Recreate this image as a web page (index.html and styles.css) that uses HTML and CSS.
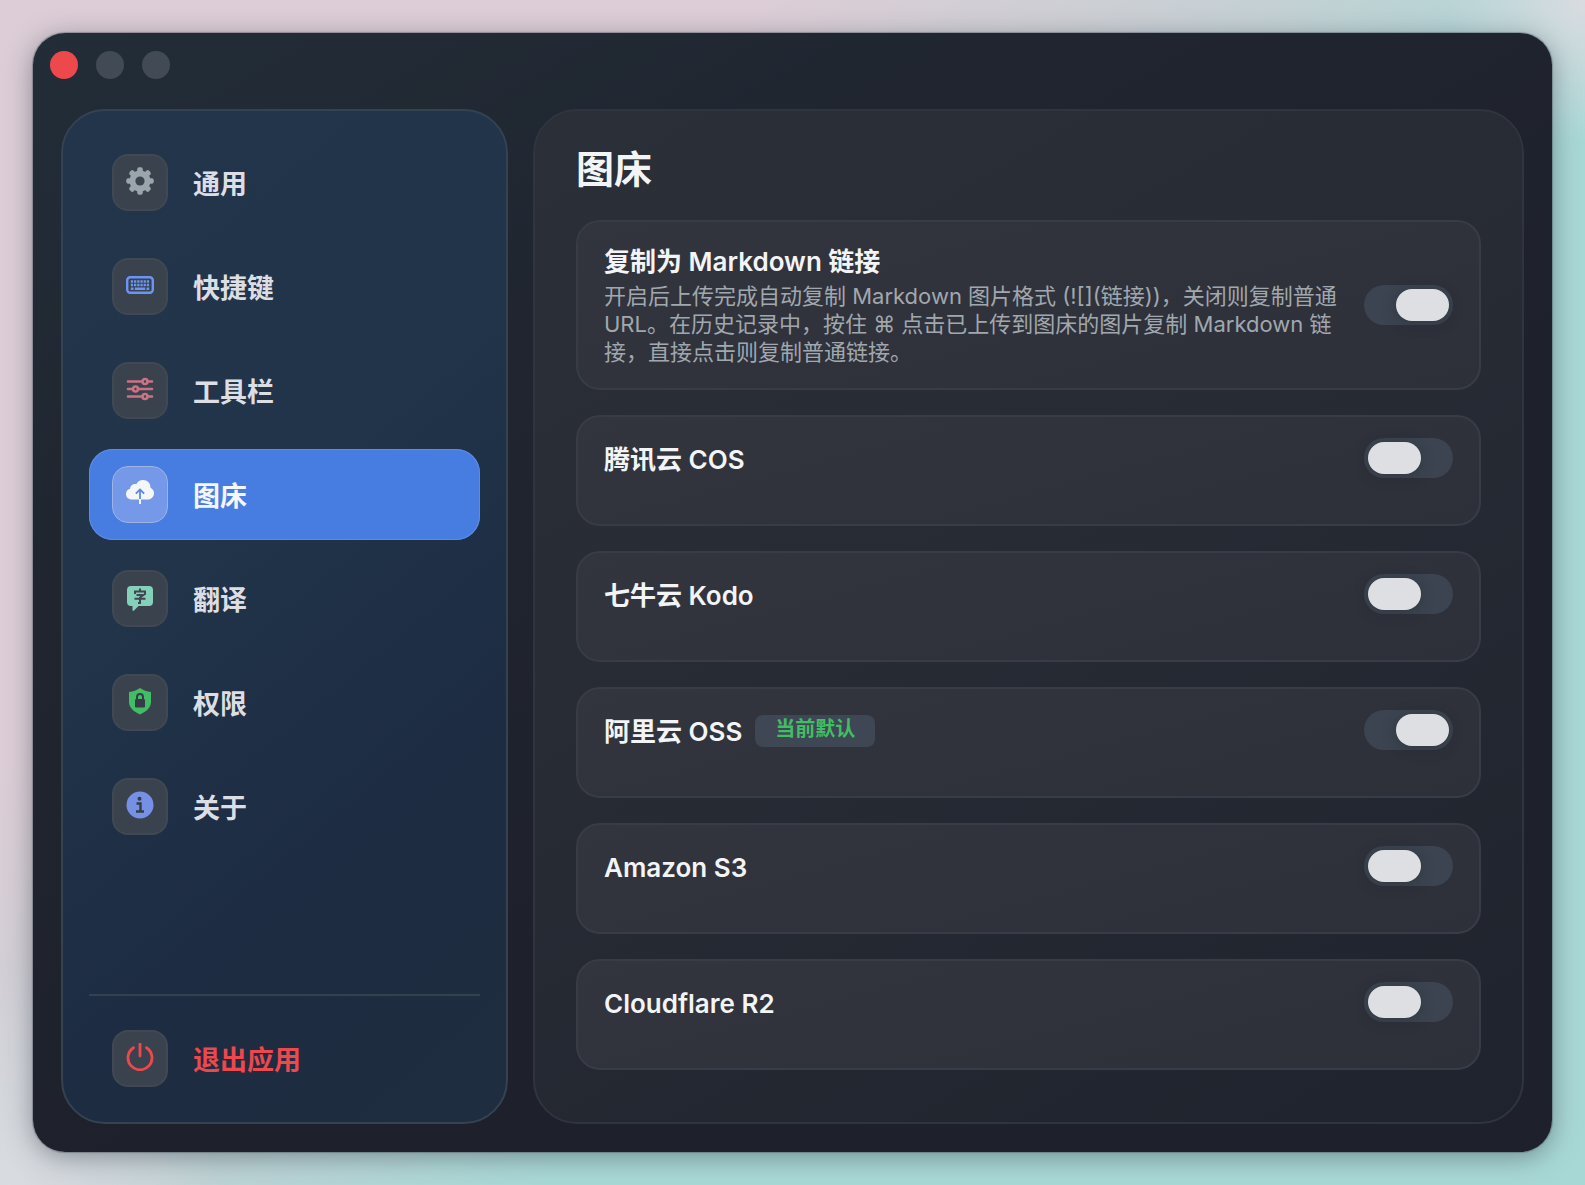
FILE: index.html
```html
<!DOCTYPE html>
<html lang="zh-CN">
<head>
<meta charset="utf-8">
<meta name="viewport" content="width=device-width, initial-scale=1">
<title>图床</title>
<link rel="stylesheet" href="styles.css">
</head>
<body>
<div class="window">
  <header class="titlebar">
    <button class="light light-close" type="button" aria-label="关闭"></button>
    <button class="light" type="button" aria-label="最小化"></button>
    <button class="light" type="button" aria-label="缩放"></button>
  </header>
  <div class="panes">
    <nav class="sidebar">
      <ul class="nav-list">
        <li><a class="nav-item" href="#general"><span class="tile"><svg class="icon c-gray" viewBox="0 0 28 28"><g fill="currentColor"><g id="teeth"><rect x="11.200" y="0.300" width="5.600" height="27.400" rx="2"/><rect x="0.300" y="11.200" width="27.400" height="5.600" rx="2"/></g><use href="#teeth" transform="rotate(45 14 14)"/></g><circle cx="14" cy="14" r="7.500" fill="none" stroke="currentColor" stroke-width="6"/><circle cx="14" cy="14" r="4.600" fill="#3c444f"/></svg></span><span class="nav-label">通用</span></a></li>
        <li><a class="nav-item" href="#shortcuts"><span class="tile"><svg class="icon c-blue" viewBox="0 0 28 28"><rect x="1.200" y="6.200" width="25.600" height="15.600" rx="3" fill="none" stroke="currentColor" stroke-width="2.400"/><path d="M4.800 10.500h18.400M4.800 14h18.400" stroke="currentColor" stroke-width="2.400" stroke-dasharray="2.300 0.900"/><path d="M4.800 17.800h2.700M8.800 17.800h10.400M20.500 17.800h2.700" stroke="currentColor" stroke-width="2.400"/></svg></span><span class="nav-label">快捷键</span></a></li>
        <li><a class="nav-item" href="#toolbar"><span class="tile"><svg class="icon c-pink" viewBox="0 0 28 28" fill="none" stroke="currentColor" stroke-width="2.600" stroke-linecap="round"><path d="M2 6.500h14.500M21.500 6.500H26M2 14h5M12 14h14M2 21.500h14.500M21.500 21.500H26"/><circle cx="19" cy="6.500" r="2.500"/><circle cx="9.500" cy="14" r="2.500"/><circle cx="19" cy="21.500" r="2.500"/></svg></span><span class="nav-label">工具栏</span></a></li>
        <li><a class="nav-item is-active" href="#hosting" aria-current="page"><span class="tile"><svg class="icon c-white" viewBox="0 0 28 28"><path fill="currentColor" d="M6 21.500C2.300 21.500 0 19 0 16c0-2.600 1.600-4.600 4-5.200C4.300 7.700 6.500 6 9 6c.5 0 .9 0 1.300.2C11.500 3.500 14 2 17 2c4.500 0 7.600 3.400 7.500 7.700 2.200 1 3.500 3 3.500 5.500 0 3.600-2.800 6.300-6.300 6.300Z"/><path d="M14 12.500v9M9.800 15.700 14 11.500l4.200 4.200" fill="none" stroke="#5a8be6" stroke-width="1.800"/><path d="M14 21v5" stroke="currentColor" stroke-width="2"/></svg></span><span class="nav-label">图床</span></a></li>
        <li><a class="nav-item" href="#translate"><span class="tile"><svg class="icon c-mint" viewBox="0 0 28 28"><path fill="currentColor" d="M5 3h18a4 4 0 0 1 4 4v12a4 4 0 0 1-4 4H12.500L8 27.500c-.8.700-1.500.4-1.500-.6V23H5a4 4 0 0 1-4-4V7a4 4 0 0 1 4-4Z"/><path d="M14 5.500v3M9 11V8.500h10V11M10.500 12h7L14 14.500V20h-2M8.500 15.800h11" fill="none" stroke="#404753" stroke-width="2"/></svg></span><span class="nav-label">翻译</span></a></li>
        <li><a class="nav-item" href="#permissions"><span class="tile"><svg class="icon c-green" viewBox="0 0 28 28"><path fill="currentColor" d="M14 1c3.500 2.500 6.500 3.300 11 4v10c0 5.500-4.500 9.500-11 12.500C7.500 24.500 3 20.500 3 15V5c4.500-.7 7.500-1.500 11-4Z"/><rect x="9" y="12" width="10" height="8.500" rx="1.200" fill="#353c48"/><path d="M11 12.500v-2.500a3 3 0 0 1 6 0v2.500" fill="none" stroke="#353c48" stroke-width="2"/></svg></span><span class="nav-label">权限</span></a></li>
        <li><a class="nav-item" href="#about"><span class="tile"><svg class="icon c-indigo" viewBox="0 0 28 28"><circle cx="14" cy="14" r="13.500" fill="currentColor"/><circle cx="13.500" cy="7.800" r="2" fill="#353c48"/><path d="M10.500 12.500h4v8M10 20.500h8" fill="none" stroke="#353c48" stroke-width="2.400"/></svg></span><span class="nav-label">关于</span></a></li>
      </ul>
      <div class="nav-footer">
        <button class="nav-item is-quit" type="button"><span class="tile"><svg class="icon" viewBox="0 0 28 28" fill="none" stroke="currentColor" stroke-width="2.800" stroke-linecap="round"><path d="M14 1v12M7.500 4.700a12 12 0 1 0 13 0"/></svg></span><span class="nav-label">退出应用</span></button>
      </div>
    </nav>
    <main class="content">
      <h1 class="page-title">图床</h1>
      <div class="cards">
        <section class="card card-tall">
          <div class="card-text">
            <label class="card-title" for="sw-md">复制为 Markdown 链接</label>
            <p class="card-desc" id="md-desc">开启后上传完成自动复制 Markdown 图片格式 (![](链接))，关闭则复制普通 URL。在历史记录中，按住 ⌘ 点击已上传到图床的图片复制 Markdown 链接，直接点击则复制普通链接。</p>
          </div>
          <input class="switch" id="sw-md" type="checkbox" role="switch" aria-describedby="md-desc" checked>
        </section>
        <section class="card">
          <label class="card-title" for="sw-cos">腾讯云 COS</label>
          <input class="switch" id="sw-cos" type="checkbox" role="switch">
        </section>
        <section class="card">
          <label class="card-title" for="sw-kodo">七牛云 Kodo</label>
          <input class="switch" id="sw-kodo" type="checkbox" role="switch">
        </section>
        <section class="card">
          <div class="card-heading">
            <label class="card-title" for="sw-oss">阿里云 OSS</label>
            <span class="badge">当前默认</span>
          </div>
          <input class="switch" id="sw-oss" type="checkbox" role="switch" checked>
        </section>
        <section class="card">
          <label class="card-title" for="sw-s3">Amazon S3</label>
          <input class="switch" id="sw-s3" type="checkbox" role="switch">
        </section>
        <section class="card">
          <label class="card-title" for="sw-r2">Cloudflare R2</label>
          <input class="switch" id="sw-r2" type="checkbox" role="switch">
        </section>
      </div>
    </main>
  </div>
</div>
</body>
</html>
```
FILE: styles.css
```css
* {
  box-sizing: border-box;
}

body {
  display: flex;
  min-height: 100vh;
  margin: 0;
  padding: 33px;
  font-family: Inter, "Noto Sans CJK SC", "DejaVu Sans", sans-serif;
  color: #f3f4f6;
  background:
    radial-gradient(circle at 100% 0, #d9dce1 0, rgba(217, 220, 225, 0) 140px),
    radial-gradient(circle at 0 100%, #d9dce1 0, rgba(217, 220, 225, 0) 220px),
    linear-gradient(135deg, #dccdd6 0%, #dccdd6 28%, #c6d0d4 45%, #a8d8d6 62%);
}

.window {
  display: flex;
  flex: 1;
  flex-direction: column;
  padding: 0 28px 28px;
  border-radius: 32px;
  background: linear-gradient(150deg, #222d38 0%, #20252f 30%, #1e212c 60%);
  box-shadow: 0 0 1px 1px rgba(70, 80, 92, 0.4), 0 5px 26px rgba(60, 70, 80, 0.5);
}

.titlebar {
  display: flex;
  align-items: center;
  gap: 18px;
  height: 76px;
  padding: 0 0 13px;
  margin-left: -11px;
}

.light {
  width: 28px;
  height: 28px;
  padding: 0;
  border: 0;
  border-radius: 50%;
  background: #414a55;
}

.light-close {
  background: #ed484c;
}

.panes {
  display: flex;
  flex: 1;
  gap: 25px;
}

.sidebar {
  display: flex;
  flex: 0 0 447px;
  flex-direction: column;
  justify-content: space-between;
  padding: 26px 26px 18px;
  border: 2px solid #344252;
  border-radius: 44px;
  background: linear-gradient(140deg, #22354b 0%, #21344a 40%, #1d2c42 70%, #1f2d3f 100%);
}

.nav-list {
  display: flex;
  flex-direction: column;
  gap: 13px;
  margin: 0;
  padding: 0;
  list-style: none;
}

.nav-item {
  display: flex;
  align-items: center;
  gap: 25px;
  width: 100%;
  height: 91px;
  padding: 0 23px;
  border: 0;
  border-radius: 24px;
  background: none;
  color: #dcdee3;
  font: 700 27px/36px Inter, "Noto Sans CJK SC", sans-serif;
  text-decoration: none;
}

.nav-item.is-active {
  background: #477de1;
  box-shadow: inset 0 0 0 1px #5e8ce0;
  color: #f5f6f8;
}

.nav-item.is-quit {
  color: #ed484c;
}

.nav-label {
  padding-top: 4px;
}

.nav-footer {
  padding-top: 17px;
  border-top: 2px solid #33424f;
}

.tile {
  display: flex;
  flex: none;
  justify-content: center;
  width: 56px;
  height: 57px;
  padding-top: 13px;
  border: 2px solid #3f4853;
  border-radius: 16px;
  background: #3a424d;
}

.is-active .tile {
  border: 1px solid #9db4e4;
  background: #7598e8;
}

.icon {
  width: 28px;
  height: 28px;
  margin-top: -2px;
}

.c-gray { color: #9aa6ab; }
.c-blue { color: #6b95f2; }
.c-pink { color: #cb7285; }
.c-white { color: #f5f6f8; }
.c-mint { color: #84d0b8; }
.c-green { color: #42bd65; }
.c-indigo { color: #7690e6; }

.content {
  flex: 1;
  min-width: 0;
  padding: 33px 41px 41px;
  border: 2px solid #2f343e;
  border-radius: 44px;
  background: linear-gradient(150deg, #2a2f38 0%, #272b34 45%, #1f232d 100%);
}

.page-title {
  margin: 0 0 26px;
  font-size: 38px;
  font-weight: 700;
  line-height: 50px;
}

.cards {
  display: flex;
  flex-direction: column;
  gap: 25px;
}

.card {
  display: flex;
  align-items: flex-start;
  justify-content: space-between;
  gap: 24px;
  min-height: 111px;
  padding: 21px 26px;
  border: 2px solid #383c47;
  border-radius: 24px;
  background: linear-gradient(165deg, #32343e, #2d3039);
}

.card-tall {
  align-items: center;
  min-height: 170px;
}

.card-title {
  display: block;
  font-size: 26px;
  font-weight: 600;
  line-height: 44px;
}

.card-text {
  flex: 1;
  min-width: 0;
}

.card-text .card-title {
  line-height: 36px;
}

.card-desc {
  margin: 2px 0 0;
  color: #a0a8ae;
  font-size: 22px;
  line-height: 28px;
}

.card-heading {
  display: flex;
  align-items: center;
  gap: 13px;
}

.badge {
  height: 32px;
  margin-bottom: 2px;
  padding: 0 20px;
  border-radius: 8px;
  background: #3e4753;
  color: #42bd65;
  font-size: 20px;
  font-weight: 700;
  line-height: 28px;
}

.switch {
  flex: none;
  width: 89px;
  height: 40px;
  margin: 0;
  padding: 4px;
  border-radius: 20px;
  background: #3b4450;
  appearance: none;
}

.switch::before {
  display: block;
  width: 53px;
  height: 32px;
  border-radius: 16px;
  background: #dddfe2;
  box-shadow: 0 2px 14px rgba(30, 32, 40, 0.35);
  content: "";
}

.switch:checked::before {
  margin-left: auto;
}
```
